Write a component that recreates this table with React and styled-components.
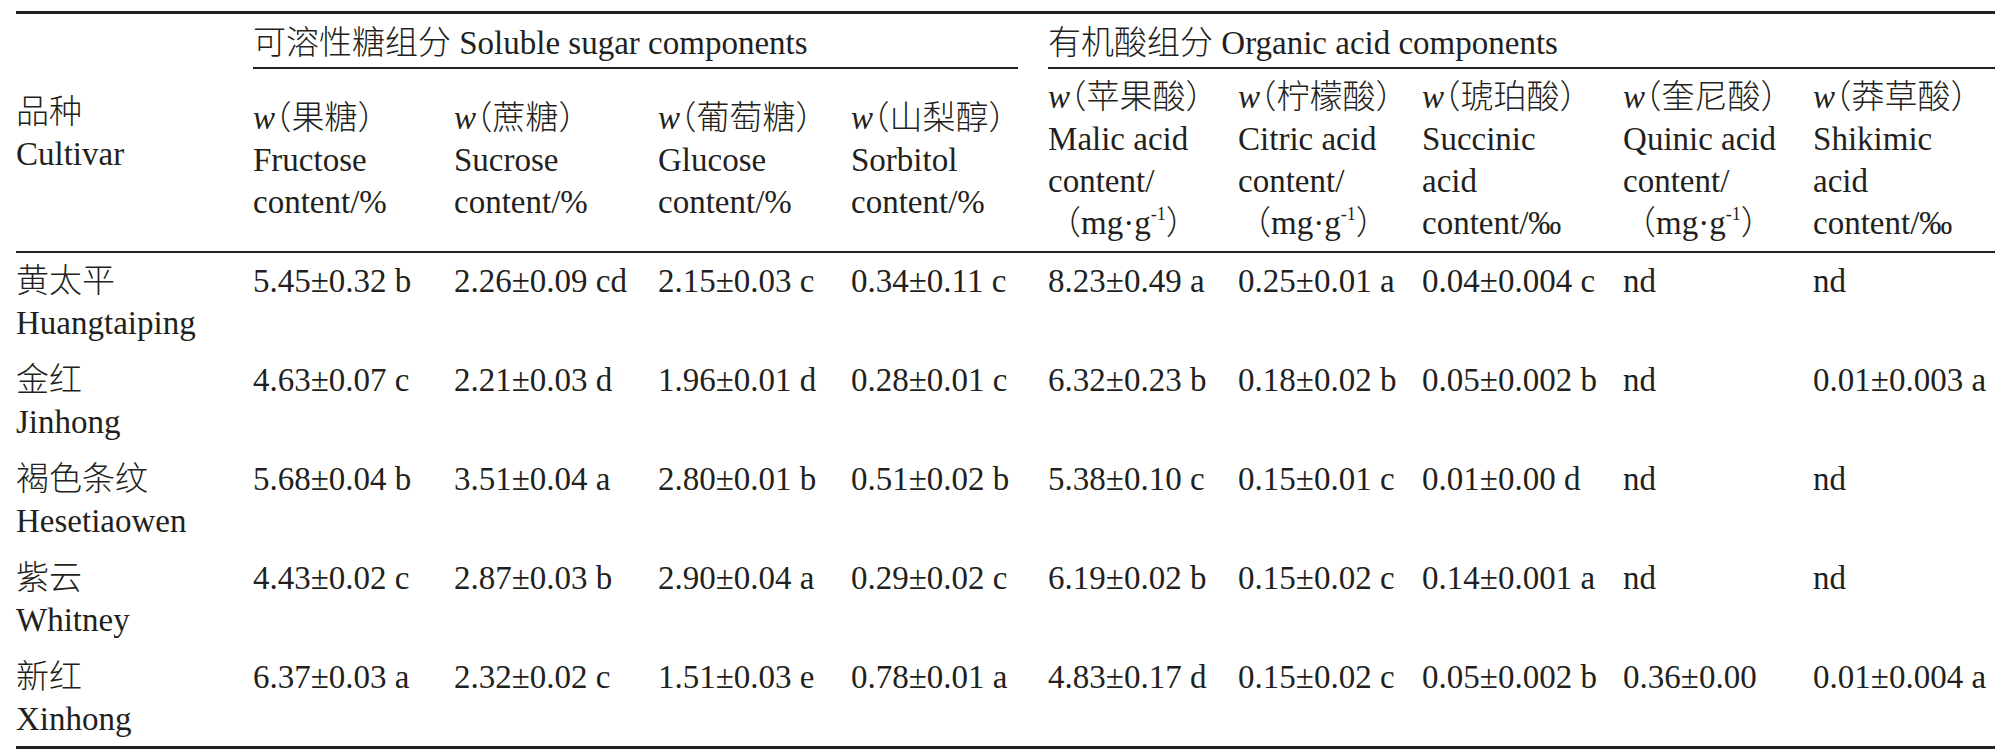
import React from "react";
import styled, { createGlobalStyle } from "styled-components";

const GlobalStyle = createGlobalStyle`
  html, body {
    margin: 0;
    padding: 0;
    background: #ffffff;
  }
  body {
    font-family: "Liberation Serif", "Noto Sans CJK SC", serif;
    color: #231f20;
  }
`;

const Page = styled.div`
  padding: 11px 0 0 16px;
`;

const Table = styled.table`
  width: 1979px;
  table-layout: fixed;
  border-collapse: collapse;
  border-top: 3px solid #231f20;
  border-bottom: 3px solid #231f20;
  font-size: 33px;
  line-height: 42px;
  font-weight: 300;
`;

const GroupCell = styled.th`
  padding: 8px 0 0;
  font-weight: 300;
  text-align: left;
  vertical-align: top;
`;

const GroupLabel = styled.div`
  padding-bottom: 3px;
  margin-right: ${(p) => p.$gap || 0}px;
  border-bottom: 2px solid #231f20;
  white-space: nowrap;
`;

const CultivarHead = styled.th`
  padding: 0;
  font-weight: 300;
  text-align: left;
  vertical-align: middle;
  border-bottom: 2px solid #231f20;
`;

const ColHead = styled.th`
  padding: 7px 0;
  font-weight: 300;
  text-align: left;
  vertical-align: middle;
  white-space: nowrap;
  border-bottom: 2px solid #231f20;
`;

const Line = styled.div``;

const Var = styled.i`
  font-style: italic;
`;

const Open = styled.span`
  font-feature-settings: "halt";
`;

const Sup = styled.sup`
  font-size: 0.55em;
  line-height: 0;
  vertical-align: 0.75em;
`;

const Cell = styled.td`
  padding: ${(p) => (p.$last ? "7px 0 6px" : "7px 0 8px")};
  vertical-align: top;
  white-space: nowrap;
`;

const widths = [237, 201, 204, 193, 197, 190, 184, 201, 190, 182];

const mg = (
  <>
    （mg·g<Sup>-1</Sup>）
  </>
);

const columns = [
  { name: "果糖", lines: ["Fructose", "content/%"] },
  { name: "蔗糖", lines: ["Sucrose", "content/%"] },
  { name: "葡萄糖", lines: ["Glucose", "content/%"] },
  { name: "山梨醇", lines: ["Sorbitol", "content/%"] },
  { name: "苹果酸", lines: ["Malic acid", "content/", mg] },
  { name: "柠檬酸", lines: ["Citric acid", "content/", mg] },
  { name: "琥珀酸", lines: ["Succinic", "acid", "content/‰"] },
  { name: "奎尼酸", lines: ["Quinic acid", "content/", mg] },
  { name: "莽草酸", lines: ["Shikimic", "acid", "content/‰"] },
];

const rows = [
  {
    zh: "黄太平",
    en: "Huangtaiping",
    values: ["5.45±0.32 b", "2.26±0.09 cd", "2.15±0.03 c", "0.34±0.11 c", "8.23±0.49 a", "0.25±0.01 a", "0.04±0.004 c", "nd", "nd"],
  },
  {
    zh: "金红",
    en: "Jinhong",
    values: ["4.63±0.07 c", "2.21±0.03 d", "1.96±0.01 d", "0.28±0.01 c", "6.32±0.23 b", "0.18±0.02 b", "0.05±0.002 b", "nd", "0.01±0.003 a"],
  },
  {
    zh: "褐色条纹",
    en: "Hesetiaowen",
    values: ["5.68±0.04 b", "3.51±0.04 a", "2.80±0.01 b", "0.51±0.02 b", "5.38±0.10 c", "0.15±0.01 c", "0.01±0.00 d", "nd", "nd"],
  },
  {
    zh: "紫云",
    en: "Whitney",
    values: ["4.43±0.02 c", "2.87±0.03 b", "2.90±0.04 a", "0.29±0.02 c", "6.19±0.02 b", "0.15±0.02 c", "0.14±0.001 a", "nd", "nd"],
  },
  {
    zh: "新红",
    en: "Xinhong",
    values: ["6.37±0.03 a", "2.32±0.02 c", "1.51±0.03 e", "0.78±0.01 a", "4.83±0.17 d", "0.15±0.02 c", "0.05±0.002 b", "0.36±0.00", "0.01±0.004 a"],
  },
];

function App() {
  return (
    <Page>
      <GlobalStyle />
      <Table>
        <colgroup>
          {widths.map((w, i) => (
            <col key={i} style={{ width: w }} />
          ))}
        </colgroup>
        <thead>
          <tr>
            <CultivarHead rowSpan={2}>
              <Line>品种</Line>
              <Line>Cultivar</Line>
            </CultivarHead>
            <GroupCell colSpan={4}>
              <GroupLabel $gap={30}>可溶性糖组分 Soluble sugar components</GroupLabel>
            </GroupCell>
            <GroupCell colSpan={5}>
              <GroupLabel>有机酸组分 Organic acid components</GroupLabel>
            </GroupCell>
          </tr>
          <tr>
            {columns.map((c) => (
              <ColHead key={c.name}>
                <Line>
                  <Var>w</Var>
                  <Open>（</Open>
                  {c.name}）
                </Line>
                {c.lines.map((l, i) => (
                  <Line key={i}>{l}</Line>
                ))}
              </ColHead>
            ))}
          </tr>
        </thead>
        <tbody>
          {rows.map((r, ri) => {
            const last = ri === rows.length - 1;
            return (
              <tr key={r.en}>
                <Cell $last={last}>
                  <Line>{r.zh}</Line>
                  <Line>{r.en}</Line>
                </Cell>
                {r.values.map((v, i) => (
                  <Cell key={i} $last={last}>
                    {v}
                  </Cell>
                ))}
              </tr>
            );
          })}
        </tbody>
      </Table>
    </Page>
  );
}

export default App;
